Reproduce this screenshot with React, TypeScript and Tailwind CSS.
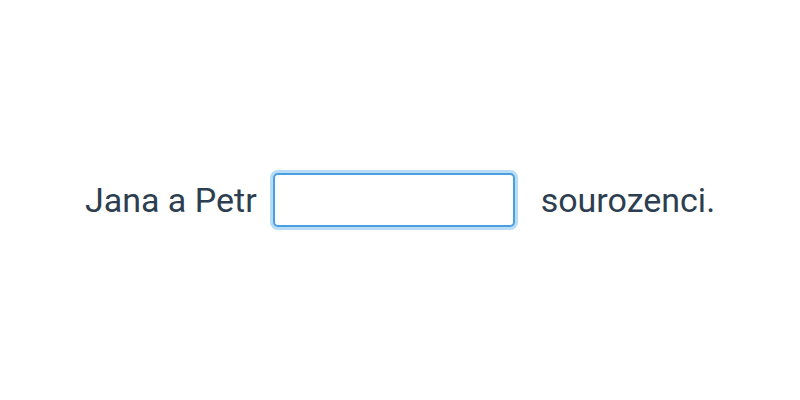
export default function App() {
  return (
    <div className="flex h-[400px] w-[800px] items-center justify-center bg-white font-['Roboto',sans-serif] text-[34px] text-[#2c3e50]">
      <span>Jana a Petr</span>
      <input
        type="text"
        className="ml-[16px] mr-[26px] h-[54px] w-[242px] rounded-[5px] border-2 border-[#4a9fe0] bg-white px-2 outline-none ring-[3px] ring-[#b9dcf6]"
      />
      <span>sourozenci.</span>
    </div>
  );
}
